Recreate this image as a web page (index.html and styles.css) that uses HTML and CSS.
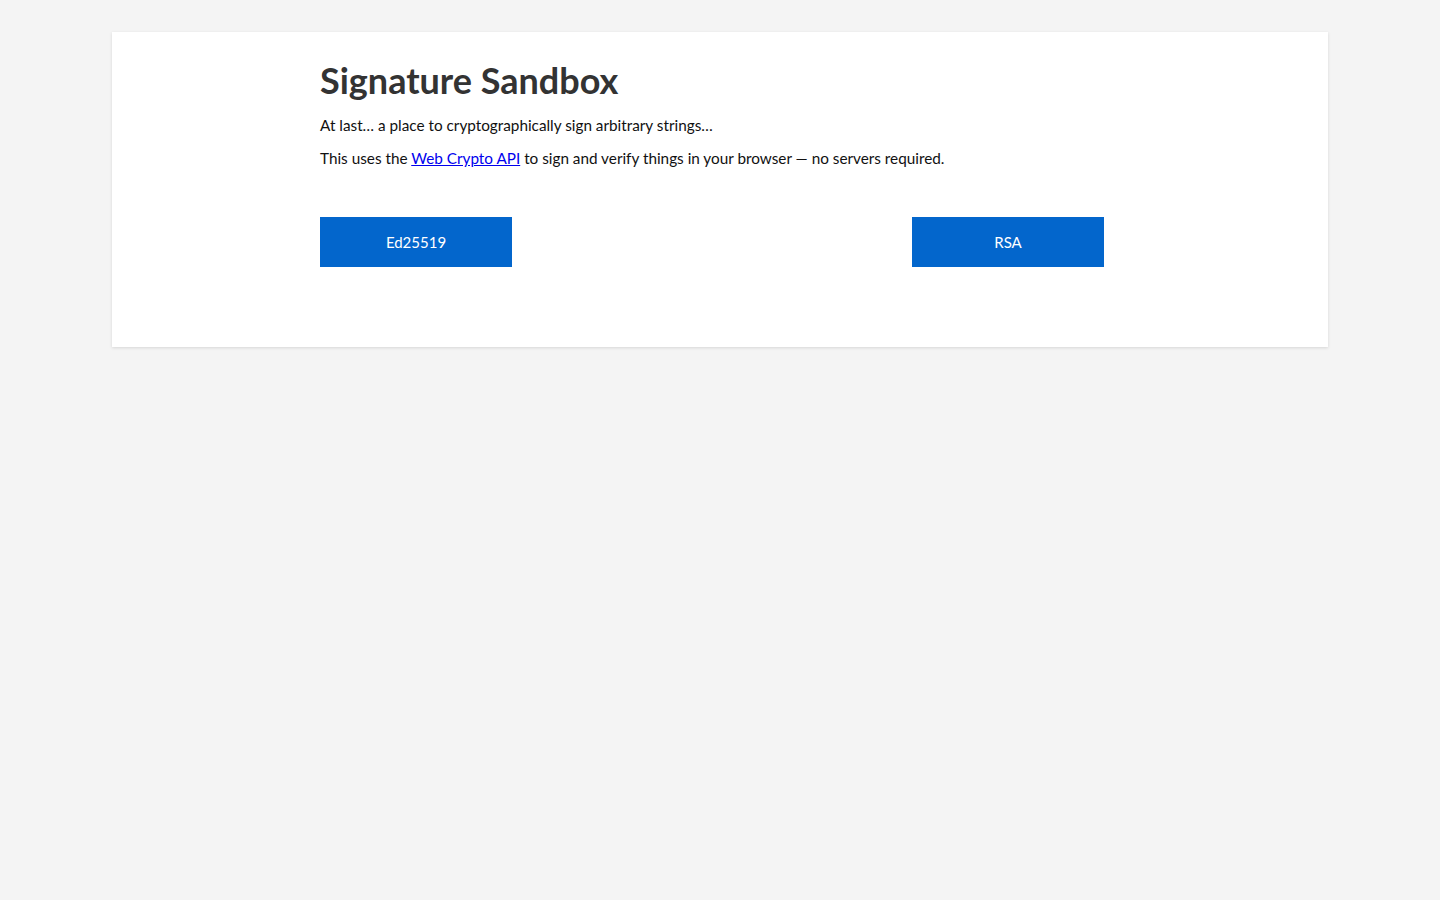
FILE: index.html
```html
<!DOCTYPE html>
<html lang="en">
<head>
<meta charset="utf-8">
<title>Signature Sandbox</title>
<link rel="stylesheet" href="styles.css">
</head>
<body>
<main class="card">
  <div class="inner">
    <h1 class="title">Signature Sandbox</h1>
    <p class="lead">At last… a place to cryptographically sign arbitrary strings…</p>
    <p class="lead">This uses the <a href="#" class="link">Web Crypto API</a> to sign and verify things in your browser — no servers required.</p>
    <div class="actions">
      <button class="btn" type="button">Ed25519</button>
      <button class="btn" type="button">RSA</button>
    </div>
  </div>
</main>
</body>
</html>
```
FILE: styles.css
```css
* { box-sizing: border-box; }
html, body { margin: 0; padding: 0; }
body {
  background: #f4f4f4;
  font-family: Lato, "Open Sans", sans-serif;
  color: #111;
  padding: 32px 112px;
}
.card {
  background: #fff;
  box-shadow: 0 1px 3px rgba(0,0,0,0.12);
  padding: 28px 0 80px 208px;
}
.inner { width: 784px; }
.title {
  margin: 0 0 15px;
  font-size: 36px;
  font-weight: 700;
  color: #333;
  line-height: 40px;
}
.lead {
  margin: 0 0 13px;
  font-size: 15.3px;
  line-height: 20px;
}
.link { color: #0000ee; }
.actions {
  display: flex;
  justify-content: space-between;
  margin-top: 49px;
}
.btn {
  width: 192px;
  height: 50px;
  border: 0;
  background: #0366cc;
  color: #fff;
  font-family: inherit;
  font-size: 15px;
  cursor: pointer;
}
```
